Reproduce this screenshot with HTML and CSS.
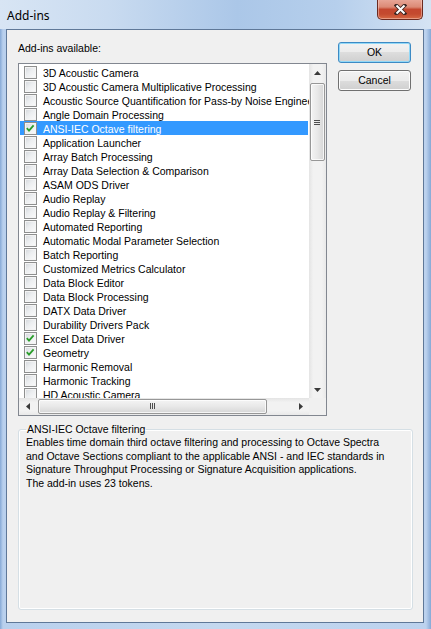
FILE: index.html
```html
<!DOCTYPE html>
<html>
<head>
<meta charset="utf-8">
<title>Add-ins</title>
<link rel="stylesheet" href="styles.css">
</head>
<body>
<div class="window">
  <div class="titlebar">
    <span class="title">Add-ins</span>
    <div class="close-btn">
      <svg width="13" height="11" viewBox="0 0 13 11"><path d="M2.5 1.5 L10.5 9.5 M10.5 1.5 L2.5 9.5" stroke="#3d2723" stroke-width="3.8" stroke-linecap="square"/><path d="M2.5 1.5 L10.5 9.5 M10.5 1.5 L2.5 9.5" stroke="#ffffff" stroke-width="2"/></svg>
    </div>
  </div>
  <div class="client">
    <div class="top">
      <div class="left">
        <div class="label">Add-ins available:</div>
        <div class="listbox">
          <div class="list-main">
            <div class="items">
              <div class="row"><span class="cb"></span><span class="txt">3D Acoustic Camera</span></div>
              <div class="row"><span class="cb"></span><span class="txt">3D Acoustic Camera Multiplicative Processing</span></div>
              <div class="row"><span class="cb"></span><span class="txt">Acoustic Source Quantification for Pass-by Noise Engineering</span></div>
              <div class="row"><span class="cb"></span><span class="txt">Angle Domain Processing</span></div>
              <div class="row sel"><span class="cb"><svg width="11" height="11" viewBox="0 0 11 11"><path d="M1.8 5.2 L4 7.6 L8.6 2.4" fill="none" stroke="#2a9d2a" stroke-width="1.8"/></svg></span><span class="txt">ANSI-IEC Octave filtering</span></div>
              <div class="row"><span class="cb"></span><span class="txt">Application Launcher</span></div>
              <div class="row"><span class="cb"></span><span class="txt">Array Batch Processing</span></div>
              <div class="row"><span class="cb"></span><span class="txt">Array Data Selection &amp; Comparison</span></div>
              <div class="row"><span class="cb"></span><span class="txt">ASAM ODS Driver</span></div>
              <div class="row"><span class="cb"></span><span class="txt">Audio Replay</span></div>
              <div class="row"><span class="cb"></span><span class="txt">Audio Replay &amp; Filtering</span></div>
              <div class="row"><span class="cb"></span><span class="txt">Automated Reporting</span></div>
              <div class="row"><span class="cb"></span><span class="txt">Automatic Modal Parameter Selection</span></div>
              <div class="row"><span class="cb"></span><span class="txt">Batch Reporting</span></div>
              <div class="row"><span class="cb"></span><span class="txt">Customized Metrics Calculator</span></div>
              <div class="row"><span class="cb"></span><span class="txt">Data Block Editor</span></div>
              <div class="row"><span class="cb"></span><span class="txt">Data Block Processing</span></div>
              <div class="row"><span class="cb"></span><span class="txt">DATX Data Driver</span></div>
              <div class="row"><span class="cb"></span><span class="txt">Durability Drivers Pack</span></div>
              <div class="row"><span class="cb"><svg width="11" height="11" viewBox="0 0 11 11"><path d="M1.8 5.2 L4 7.6 L8.6 2.4" fill="none" stroke="#2a9d2a" stroke-width="1.8"/></svg></span><span class="txt">Excel Data Driver</span></div>
              <div class="row"><span class="cb"><svg width="11" height="11" viewBox="0 0 11 11"><path d="M1.8 5.2 L4 7.6 L8.6 2.4" fill="none" stroke="#2a9d2a" stroke-width="1.8"/></svg></span><span class="txt">Geometry</span></div>
              <div class="row"><span class="cb"></span><span class="txt">Harmonic Removal</span></div>
              <div class="row"><span class="cb"></span><span class="txt">Harmonic Tracking</span></div>
              <div class="row"><span class="cb"></span><span class="txt">HD Acoustic Camera</span></div>
            </div>
            <div class="vscroll">
              <div class="sb-btn"><svg width="7" height="4" viewBox="0 0 7 4"><path d="M0 4 L3.5 0 L7 4 Z" fill="#3a3a3a"/></svg></div>
              <div class="vtrack">
                <div class="vthumb"><svg width="7" height="7" viewBox="0 0 7 7"><path d="M0 1.5 H6 M0 3.5 H6 M0 5.5 H6" stroke="#4d4d4d" stroke-width="1"/></svg></div>
              </div>
              <div class="sb-btn"><svg width="7" height="4" viewBox="0 0 7 4"><path d="M0 0 L3.5 4 L7 0 Z" fill="#3a3a3a"/></svg></div>
            </div>
          </div>
          <div class="hrow">
            <div class="hscroll">
              <div class="sb-btn h"><svg width="4" height="7" viewBox="0 0 4 7"><path d="M4 0 L0 3.5 L4 7 Z" fill="#3a3a3a"/></svg></div>
              <div class="htrack">
                <div class="hthumb"><svg width="7" height="7" viewBox="0 0 7 7"><path d="M1.5 0 V6 M3.5 0 V6 M5.5 0 V6" stroke="#4d4d4d" stroke-width="1"/></svg></div>
              </div>
              <div class="sb-btn h"><svg width="4" height="7" viewBox="0 0 4 7"><path d="M0 0 L4 3.5 L0 7 Z" fill="#3a3a3a"/></svg></div>
            </div>
            <div class="corner"></div>
          </div>
        </div>
      </div>
      <div class="buttons">
        <button class="btn default">OK</button>
        <button class="btn">Cancel</button>
      </div>
    </div>
    <fieldset class="group">
      <legend>ANSI-IEC Octave filtering</legend>
      <p class="desc">Enables time domain third octave filtering and processing to Octave Spectra<br>and Octave Sections compliant to the applicable ANSI - and IEC standards in<br>Signature Throughput Processing or Signature Acquisition applications.<br>The add-in uses 23 tokens.</p>
    </fieldset>
  </div>
</div>
</body>
</html>
```
FILE: styles.css
```css
* { box-sizing: border-box; }
html, body { margin: 0; padding: 0; }
body {
  width: 431px;
  height: 629px;
  overflow: hidden;
  background: #bcd3ee;
  font-family: "Liberation Sans", Arial, sans-serif;
  font-size: 10.5px;
  color: #000;
}
.window {
  width: 431px;
  height: 629px;
  display: flex;
  flex-direction: column;
  background: linear-gradient(to right, #86a9d6 0, #b9d0ed 3px, #c4d8ef 50%, #bcd2ee calc(100% - 5px), #86a9d6 100%);
}
.titlebar {
  height: 29px;
  flex: none;
  display: flex;
  justify-content: space-between;
  align-items: flex-start;
  background: linear-gradient(to right, #d8e5f4 0%, #c9dbf0 25%, #abc7e8 55%, #b6cfec 78%, #d5e3f3 100%);
}
.title {
  font-family: "Segoe UI", "Noto Sans", sans-serif;
  font-size: 12px;
  line-height: 16px;
  margin: 8px 0 0 7px;
}
.close-btn {
  width: 46px;
  height: 21px;
  margin: -1px 8px 0 0;
  border: 1px solid #6b2a20;
  border-top: none;
  border-radius: 0 0 5px 5px;
  background: linear-gradient(#e9a99b 0%, #dc8a76 40%, #c4472f 52%, #c44a2f 75%, #d66a45 100%);
  box-shadow: inset 0 0 0 1px rgba(255, 220, 210, 0.45);
  display: flex;
  align-items: center;
  justify-content: center;
  padding-top: 1px;
}
.client {
  flex: 1;
  margin: 0 7px 6px 6px;
  border: 1px solid #5f7898;
  background: #f0f0f0;
  display: flex;
  flex-direction: column;
  padding: 10px 10px 12px 11px;
}
.top {
  display: flex;
  gap: 11px;
  align-items: flex-start;
  flex: none;
}
.left { width: 309px; }
.label {
  height: 14px;
  line-height: 16px;
  margin-bottom: 9px;
}
.listbox {
  height: 353px;
  border: 1px solid #828790;
  background: #fff;
  display: flex;
  flex-direction: column;
}
.list-main {
  flex: 1;
  min-height: 0;
  display: flex;
}
.items {
  flex: 1;
  overflow: hidden;
  padding: 1px 1px 0 1px;
}
.row {
  height: 14px;
  display: flex;
  align-items: flex-start;
  white-space: nowrap;
  padding-left: 4px;
}
.row.sel { background: #3399ff; color: #fff; }
.cb {
  width: 13px;
  height: 13px;
  flex: none;
  margin: 1px 6px 0 0;
  border: 1px solid #8e8f8f;
  background: linear-gradient(135deg, #d3d6db 0%, #eceef0 45%, #fbfbfb 100%);
  box-shadow: inset 0 0 0 1px #f4f4f4;
}
.cb svg { display: block; }
.txt { line-height: 16px; height: 14px; }
.vscroll {
  width: 17px;
  flex: none;
  display: flex;
  flex-direction: column;
  background: linear-gradient(to right, #e4e4e4, #f2f2f2 25%, #f2f2f2 75%, #e9e9e9);
}
.sb-btn {
  height: 17px;
  flex: none;
  display: flex;
  align-items: center;
  justify-content: center;
}
.sb-btn svg { display: block; }
.sb-btn.h { width: 17px; height: auto; }
.vtrack { flex: 1; }
.vthumb {
  margin: 2px 1px 0 1px;
  height: 78px;
  border: 1px solid #979797;
  border-radius: 2px;
  background: linear-gradient(to right, #f4f4f4 0%, #e8e8e8 50%, #d6d6d6 100%);
  box-shadow: inset 0 0 0 1px rgba(255, 255, 255, 0.75);
  display: flex;
  align-items: center;
  justify-content: center;
}
.hrow {
  height: 17px;
  flex: none;
  display: flex;
}
.hscroll {
  flex: 1;
  display: flex;
  background: linear-gradient(#e4e4e4, #f2f2f2 25%, #f2f2f2 75%, #e9e9e9);
}
.htrack { flex: 1; }
.hthumb {
  margin: 1px 0 0 2px;
  width: 229px;
  height: 15px;
  border: 1px solid #979797;
  border-radius: 2px;
  background: linear-gradient(#f4f4f4 0%, #e8e8e8 50%, #d6d6d6 100%);
  box-shadow: inset 0 0 0 1px rgba(255, 255, 255, 0.75);
  display: flex;
  align-items: center;
  justify-content: center;
}
.corner { width: 17px; flex: none; background: #f0f0f0; }
.buttons {
  width: 73px;
  display: flex;
  flex-direction: column;
  gap: 7px;
  margin-top: 2px;
}
.btn {
  height: 21px;
  padding: 0;
  font: inherit;
  color: #000;
  border: 1px solid #707070;
  border-radius: 3px;
  background: linear-gradient(#f2f2f2 0%, #ebebeb 50%, #dddddd 50%, #cfcfcf 100%);
  box-shadow: inset 0 0 0 1px #fcfcfc;
  line-height: 19px;
  text-align: center;
}
.btn.default {
  border-color: #3c8ac4;
  box-shadow: inset 0 0 0 1px #92d8f7;
}
.group {
  flex: 1;
  margin: 6px 0 0 0;
  padding: 0 7px 0 7px;
  border: 1px solid #d5dfe5;
  border-radius: 3px;
  box-shadow: inset 0 0 0 1px #ffffff;
  min-width: 0;
}
.group legend {
  padding: 0 1px;
  line-height: 14px;
}
.desc {
  margin: 0;
  line-height: 13.7px;
  white-space: nowrap;
}
```
